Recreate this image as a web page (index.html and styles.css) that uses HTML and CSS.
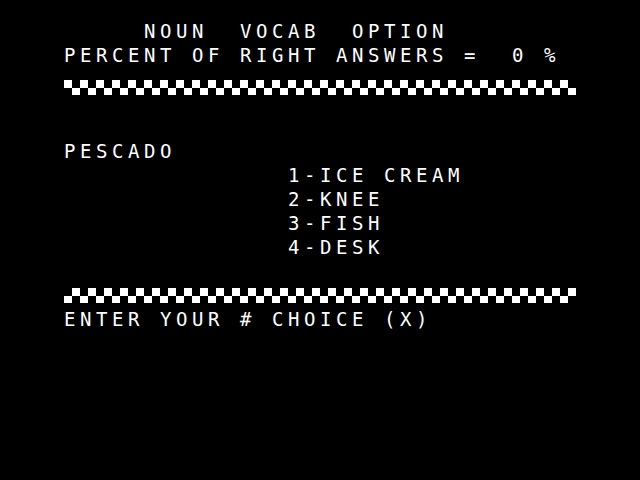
FILE: index.html
```html
<!DOCTYPE html>
<html>
<head>
<meta charset="utf-8">
<title>Noun Vocab Option</title>
<link rel="stylesheet" href="styles.css">
</head>
<body>
<div class="screen">
  <div class="line title">NOUN  VOCAB  OPTION</div>
  <div class="line">PERCENT OF RIGHT ANSWERS =  0 %</div>
  <div class="checker checker-a"></div>
  <div class="line">PESCADO</div>
  <div class="choices">
    <div class="line">1-ICE CREAM</div>
    <div class="line">2-KNEE</div>
    <div class="line">3-FISH</div>
    <div class="line">4-DESK</div>
  </div>
  <div class="checker checker-b"></div>
  <div class="line">ENTER YOUR # CHOICE (X)</div>
</div>
</body>
</html>
```
FILE: styles.css
```css
html, body {
  margin: 0;
  padding: 0;
  background: #000;
}

.screen {
  width: 640px;
  height: 480px;
  box-sizing: border-box;
  padding: 19px 0 0 64px;
  background: #000;
  color: #fff;
  font-family: "DejaVu Sans Mono", "Liberation Mono", monospace;
  font-size: 19px;
  letter-spacing: 4.56px;
  line-height: 24px;
}

.line {
  height: 24px;
  white-space: pre;
}

.title {
  padding-left: 80px;
}

.choices {
  padding-left: 224px;
}

.checker {
  width: 512px;
  height: 15px;
}

.checker-a {
  margin: 13px 0 44px;
  background:
    repeating-linear-gradient(90deg, #fff 0 8px, #000 8px 16px) left top / 100% 8px no-repeat,
    repeating-linear-gradient(90deg, #000 0 8px, #fff 8px 16px) left bottom / 100% 7px no-repeat;
}

.checker-b {
  margin: 29px 0 4px;
  background:
    repeating-linear-gradient(90deg, #000 0 8px, #fff 8px 16px) left top / 100% 8px no-repeat,
    repeating-linear-gradient(90deg, #fff 0 8px, #000 8px 16px) left bottom / 100% 7px no-repeat;
}
```
